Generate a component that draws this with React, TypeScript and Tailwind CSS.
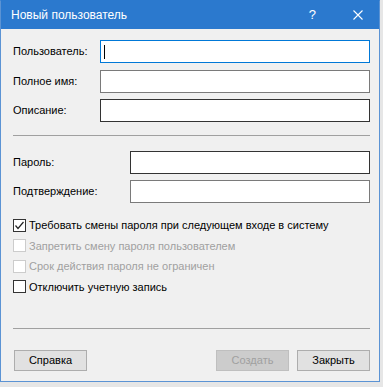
import React from "react";

const font = { fontFamily: '"Liberation Sans", Arial, sans-serif' };

const TextField = ({ border, cursor }: { border: string; cursor?: boolean }) => (
  <div className={`flex-1 h-[23px] bg-white border ${border} flex items-center pl-[3px]`}>
    {cursor && <div className="w-px h-[14px] bg-black" />}
  </div>
);

const Check = ({ label, checked, disabled }: { label: string; checked?: boolean; disabled?: boolean }) => (
  <div className="h-[20.5px] flex items-center">
    <div
      className={`w-[13px] h-[13px] bg-white border flex items-center justify-center ${
        disabled ? "border-[#cccccc]" : "border-[#333333]"
      }`}
    >
      {checked && (
        <svg width="11" height="11" viewBox="0 0 11 11">
          <polyline points="1.5,5.5 4,8.5 9.5,2" fill="none" stroke="#222" strokeWidth="1.2" />
        </svg>
      )}
    </div>
    <span className={`ml-[3px] text-[11px] ${disabled ? "text-[#a0a0a0]" : "text-black"}`}>{label}</span>
  </div>
);

const Button = ({ label, disabled }: { label: string; disabled?: boolean }) => (
  <div
    className={`w-[73px] h-[21px] border flex items-center justify-center text-[11px] ${
      disabled ? "bg-[#cccccc] border-[#bfbfbf] text-[#a0a0a0]" : "bg-[#e1e1e1] border-[#adadad] text-black"
    }`}
  >
    {label}
  </div>
);

const App = () => {
  return (
    <div className="w-[383px] h-[387px] bg-[#e6e6e6] overflow-hidden" style={font}>
      <div className="w-[380px] h-[382px] bg-[#f0f0f0] border border-[#2b79ce] border-l-[#5b93d4] border-r-[#5b93d4] border-b-[#5b93d4] flex flex-col">
        <div className="h-[28px] bg-[#2b79ce] flex items-center text-white shrink-0">
          <span className="ml-[10px] text-[12px] flex-1">Новый пользователь</span>
          <span className="text-[13px] mr-[37px]">?</span>
          <svg width="10" height="10" viewBox="0 0 10 10" className="mr-[16px]">
            <path d="M0.5 0.5 L9.5 9.5 M9.5 0.5 L0.5 9.5" stroke="white" strokeWidth="1.1" />
          </svg>
        </div>

        <div className="flex-1 pl-[12px] pr-[9px] pt-[11px] flex flex-col text-[11px]">
          <div className="flex flex-col gap-[6.5px]">
            <div className="flex items-center">
              <span className="w-[87px]">Пользователь:</span>
              <TextField border="border-[#0078d7]" cursor />
            </div>
            <div className="flex items-center">
              <span className="w-[87px]">Полное имя:</span>
              <TextField border="border-[#7a7a7a]" />
            </div>
            <div className="flex items-center">
              <span className="w-[87px]">Описание:</span>
              <TextField border="border-[#333333]" />
            </div>
          </div>

          <div className="mt-[13px] h-px bg-[#a0a0a0]" />

          <div className="mt-[15px] flex flex-col gap-[6px]">
            <div className="flex items-center">
              <span className="w-[117px]">Пароль:</span>
              <TextField border="border-[#333333]" />
            </div>
            <div className="flex items-center">
              <span className="w-[117px]">Подтверждение:</span>
              <TextField border="border-[#7a7a7a]" />
            </div>
          </div>

          <div className="mt-[12px] flex flex-col">
            <Check label="Требовать смены пароля при следующем входе в систему" checked />
            <Check label="Запретить смену пароля пользователем" disabled />
            <Check label="Срок действия пароля не ограничен" disabled />
            <Check label="Отключить учетную запись" />
          </div>

          <div className="mt-[31px] h-px bg-[#a0a0a0]" />

          <div className="mt-[21px] flex pl-px">
            <Button label="Справка" />
            <div className="flex-1" />
            <Button label="Создать" disabled />
            <div className="w-[8px]" />
            <Button label="Закрыть" />
          </div>
        </div>
      </div>
    </div>
  );
};

export default App;
